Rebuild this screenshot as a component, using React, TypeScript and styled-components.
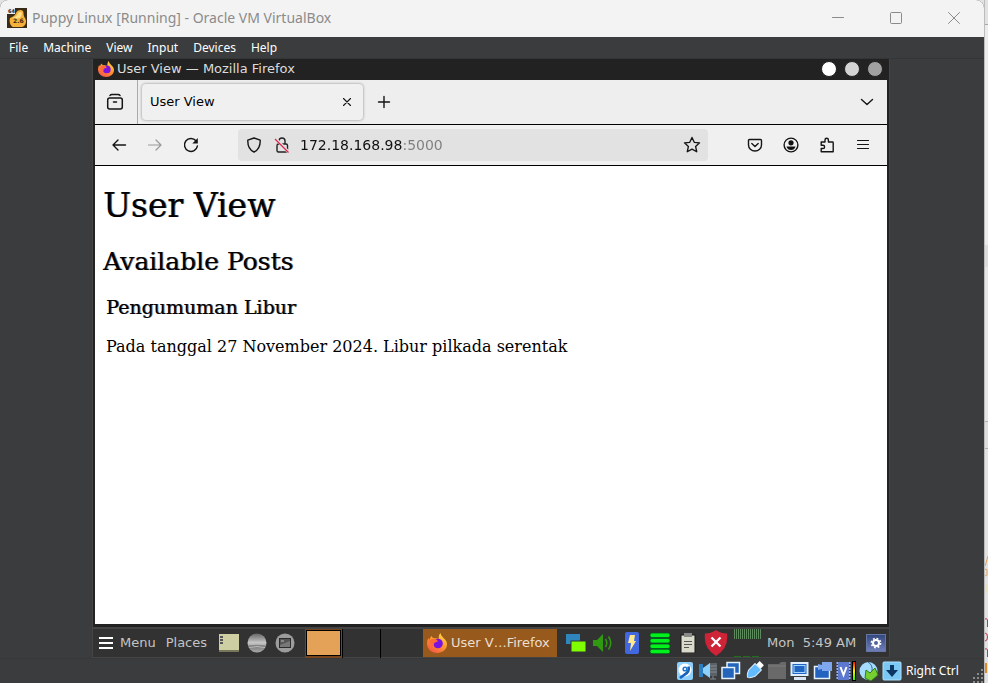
import React from "react";
import styled, { createGlobalStyle, css } from "styled-components";

const Global = createGlobalStyle`
  * { box-sizing: border-box; }
  html, body, #root { height: 100%; }
  body { margin: 0; background: #e4e4e4; overflow: hidden; }
  button, input { font: inherit; color: inherit; }
  svg { display: block; flex: none; }
`;

const sans = '"DejaVu Sans", sans-serif';
const ui = '"Noto Sans", "Open Sans", sans-serif';

const Desktop = styled.div`
  display: grid;
  grid-template-columns: 1fr 4px;
  height: 100%;
  background: #e4e4e4;
`;

const Behind = styled.aside`
  display: flex;
  flex-direction: column;
  justify-content: flex-end;
  min-height: 0;
  padding-bottom: 4px;
  overflow: hidden;
  border-left: 1px solid #bcbcbc;
  background: linear-gradient(#e2e2e2 0 24px, #a8a8a8 24px 25px, #ececec 25px 245px, #dcdcdc 245px 267px, #e6e6e6 267px 421px, #b0b0b0 421px 422px, #dedede 422px 448px, #b0b0b0 448px 449px, #e2e2e2 449px);
`;

const Window = styled.section`
  display: flex;
  flex-direction: column;
  min-width: 0;
  background: #3b3c3d;
  border-radius: 8px 8px 0 0;
  overflow: hidden;
`;

const TitleBar = styled.header`
  display: flex;
  align-items: center;
  height: 37px;
  padding: 0 12px 1px 7px;
  gap: 5px;
  background: #f3f3f3;
`;

const WindowTitle = styled.h1`
  flex: 1;
  margin: 0;
  font: 400 14px/20px ${ui};
  color: #8b8b8b;
  white-space: nowrap;
`;

const IconButton = styled.button<{ $w: number; $h?: number }>`
  display: flex;
  flex: none;
  align-items: center;
  justify-content: center;
  width: ${(p) => p.$w}px;
  height: ${(p) => p.$h ?? 28}px;
  padding: 0;
  border: 0;
  background: none;
`;

const MenuBar = styled.nav`
  display: flex;
  align-items: center;
  height: 21px;
  padding: 0 9px;
  gap: 15px;
  color: #fff;
`;

const MenuItem = styled.button`
  padding: 0;
  border: 0;
  background: none;
  font: 12px/20px ${ui};
`;

const Stage = styled.main`
  display: flex;
  flex: 1;
  min-height: 0;
  padding: 0 94px 0 92px;
  border-top: 1px solid #343536;
  border-bottom: 1px solid #373839;
`;

const Guest = styled.div`
  display: flex;
  flex: 1;
  flex-direction: column;
  min-width: 0;
  border: solid #454545;
  border-width: 0 1px 1px;
  background: #222;
  font-family: ${sans};
`;

const Browser = styled.article`
  display: flex;
  flex: 1;
  flex-direction: column;
  padding: 0 2px 3px;
  border-bottom: 2px solid #444;
  background: #222;
`;

const GuestTitle = styled.header`
  display: flex;
  align-items: center;
  height: 21px;
  padding: 0 4px 2px 3px;
  gap: 3px;
  color: #dcdcdc;
  font: 13px/18px ${sans};
`;

const Grow = styled.span`
  flex: 1;
`;

const Dots = styled.div`
  display: flex;
  gap: 7px;
`;

const Dot = styled.button<{ $color: string }>`
  width: 16px;
  height: 16px;
  padding: 0;
  border: 1px solid #222;
  border-radius: 50%;
  background: ${(p) => p.$color};
`;

const Tabs = styled.div`
  display: flex;
  align-items: center;
  height: 45px;
  border-bottom: 1px solid #000;
  background: #eee;
`;

const TabOverview = styled.div`
  display: flex;
  align-items: center;
  align-self: stretch;
  padding: 0 8px 0 5px;
  border-right: 1px solid #aaa;
`;

const Tab = styled.div`
  display: flex;
  align-items: center;
  width: 221px;
  height: 36px;
  margin: 0 6px 0 4px;
  padding: 0 2px 0 8px;
  border-radius: 4px;
  background: #f0f0f0;
  box-shadow: 0 0 3px #888;
  font: 13px/20px ${sans};
`;

const Toolbar = styled.div`
  display: flex;
  align-items: center;
  height: 41px;
  padding: 0 6px;
  border-bottom: 1px solid #000;
  background: #f0f0f0;
`;

const ToolGroup = styled.div<{ $gap: number }>`
  display: flex;
  align-items: center;
  gap: ${(p) => p.$gap}px;
`;

const AddressBar = styled.label`
  display: flex;
  flex: 1;
  align-items: center;
  height: 32px;
  margin: 0 29px;
  padding: 0 2px;
  border-radius: 4px;
  background: #e2e2e2;
  font-size: 14px;
  line-height: 20px;
`;

const AddressInput = styled.input`
  flex: 1;
  min-width: 0;
  margin-left: 4px;
  padding: 0;
  border: 0;
  outline: 0;
  background: linear-gradient(90deg, #111 103px, #7d7d7d 103px);
  background-clip: text;
  -webkit-background-clip: text;
  -webkit-text-fill-color: transparent;
`;

const Page = styled.div`
  flex: 1;
  padding: 19px 8px;
  background: #fff;
  color: #000;
  font-family: "DejaVu Serif", serif;
`;

const heading = css`
  margin: 0;
  font-weight: 400;
  text-shadow: 1px 0 0 rgba(0, 0, 0, 0.6);
`;

const H1 = styled.h1`
  ${heading}
  font-size: 33px;
  line-height: 42px;
`;
const H2 = styled.h2`
  ${heading}
  margin-top: 19px;
  font-size: 25px;
  line-height: 32px;
`;
const Post = styled.section`
  padding: 0 3px;
`;
const H3 = styled.h3`
  ${heading}
  margin-top: 17px;
  font-size: 19px;
  line-height: 24px;
`;
const Body = styled.p`
  margin: 18px 0 0;
  font-size: 16px;
  line-height: 20px;
`;

const Taskbar = styled.footer`
  display: flex;
  align-items: center;
  height: 28px;
  padding: 0 3px 0 6px;
  background: #323232;
  color: #c4c4c4;
  font: 13px/20px ${sans};
`;

const TaskButton = styled.button`
  display: flex;
  align-items: center;
  gap: 7px;
  padding: 0;
  border: 0;
  background: none;
  white-space: nowrap;
`;

const Launchers = styled.div`
  display: flex;
  align-items: center;
  gap: 8px;
  margin: 0 10px 0 12px;
`;

const Workspaces = styled.div`
  display: grid;
  grid-template-columns: 38px 38px 42px;
  height: 28px;
`;

const Workspace = styled.button<{ $active?: boolean }>`
  padding: 1px 1px 2px;
  border: 0;
  border-right: 1px solid #000;
  background: ${(p) => (p.$active ? "#77451d" : "none")};
  &:last-child { border-right: 0; }
  &::before {
    content: "";
    display: ${(p) => (p.$active ? "block" : "none")};
    height: 24px;
    border: 1px solid #000;
    background: #e3a258;
  }
`;

const ActiveTask = styled.button`
  display: flex;
  flex: none;
  align-items: center;
  width: 134px;
  height: 28px;
  padding: 0 4px;
  gap: 4px;
  border: 0;
  background: #98591c;
  color: #eadfd2;
  white-space: nowrap;
`;

const Tray = styled.div`
  display: flex;
  flex: 1;
  align-items: center;
  gap: 6px;
  margin-left: 9px;
`;

const Clock = styled.time`
  margin-right: auto;
  white-space: pre;
`;

const StatusBar = styled.footer`
  display: flex;
  align-items: center;
  justify-content: flex-end;
  height: 24px;
  gap: 3px;
  color: #fff;
  font: 12px/20px ${ui};
`;

const HostKey = styled.span`
  width: 61px;
  margin-left: 1px;
  white-space: nowrap;
`;

const Corner = styled.span`
  align-self: flex-end;
`;

const Stroke = ({ w = 16, d, color = "#151515", sw = 1.4 }: { w?: number; d: string; color?: string; sw?: number }) => (
  <svg width={w} height={w} viewBox="0 0 16 16" fill="none" stroke={color} strokeWidth={sw} strokeLinecap="round" strokeLinejoin="round" aria-hidden>
    <path d={d} />
  </svg>
);

const Firefox = ({ size }: { size: number }) => (
  <svg width={size} height={size} viewBox="0 0 20 20" aria-hidden>
    <defs>
      <linearGradient id={"fx" + size} x1="0.85" y1="0" x2="0.2" y2="1">
        <stop offset="0" stopColor="#ffe34a" />
        <stop offset="0.45" stopColor="#ff9a2e" />
        <stop offset="1" stopColor="#f5524c" />
      </linearGradient>
    </defs>
    <path fill={"url(#fx" + size + ")"} d="M13.5 0c.3 2.200 1.500 3.300 3 5 2.300 1.900 3.500 4 3.500 6.300C20 16.200 15.700 20 10.200 20 4.700 20 0 16.100 0 10.700 0 8.200.8 6.200 1.500 5c.2.8.4 1.200 1 1.700C2.800 5.300 3.400 4 4.700 3c.3 1.200 1 2 2.500 2.200 2-.1 3.500.2 4.500.8C11.500 3.600 12 1.500 13.500 0z" />
    <circle cx="11" cy="10.500" r="4.800" fill="#7a12e0" />
    <path fill="#ff6a3a" d="M2 8c2-2 4.500-2.400 7.500-1.600L11 8.200 8.200 9.500C7 10 6.500 11 7 12.500L4 14z" />
  </svg>
);

const PuppyLogo = () => (
  <svg width="20" height="20" viewBox="0 0 20 20" aria-hidden>
    <rect width="20" height="20" fill="#3a2b18" />
    <path fill="#f5b13a" d="M3 10c2-1 5-2 6-5s5-4 7-2c1 2 0 4 2 7s1 8-3 9H6c-3-1-4-6-3-9z" />
    <path fill="#ffe08a" d="M5 10c3-1 5-2 6-5 2-2 4-1 4 1l-2 4-6 1z" />
    <rect x="0" y="0" width="8" height="6" fill="#eee" />
    <text x="1" y="5" fontSize="5" fontWeight="700" fontFamily="DejaVu Sans" fill="#222">64</text>
    <text x="6" y="15" fontSize="6" fontWeight="700" fontFamily="DejaVu Sans" fill="#3b250c">2.6</text>
  </svg>
);

const Menu = ["File", "Machine", "View", "Input", "Devices", "Help"];

export default function App() {
  return (
    <>
      <Global />
      <Desktop>
        <Window>
          <TitleBar>
            <PuppyLogo />
            <WindowTitle>Puppy Linux [Running] - Oracle VM VirtualBox</WindowTitle>
            <ToolGroup $gap={22}>
              <IconButton $w={36} aria-label="Minimize"><Stroke d="M2.500 7.500h11" color="#8b8b8b" sw={1} /></IconButton>
              <IconButton $w={36} aria-label="Maximize"><svg width="16" height="16" fill="none" stroke="#8b8b8b"><rect x="2.500" y="2.500" width="11" height="11" rx="1" /></svg></IconButton>
              <IconButton $w={36} aria-label="Close"><Stroke d="M2.500 2.500l11 11m0-11l-11 11" color="#8b8b8b" sw={1} /></IconButton>
            </ToolGroup>
          </TitleBar>
          <MenuBar>{Menu.map((m) => <MenuItem key={m}>{m}</MenuItem>)}</MenuBar>
          <Stage>
            <Guest>
              <Browser>
                <GuestTitle>
                  <Firefox size={16} />
                  <span>User View — Mozilla Firefox</span>
                  <Grow />
                  <Dots>
                    <Dot $color="#fff" aria-label="Minimize" />
                    <Dot $color="#d3d3d3" aria-label="Maximize" />
                    <Dot $color="#a0a0a0" aria-label="Close" />
                  </Dots>
                </GuestTitle>
                <Tabs>
                  <TabOverview>
                    <IconButton $w={29} aria-label="Firefox View">
                      <svg width="18" height="18" viewBox="0 0 18 18" fill="none" stroke="#151515" strokeWidth="1.500" strokeLinecap="round"><path d="M4 2.500Q4.500 1.500 6 1.500h6Q13.500 1.500 14 2.500" /><rect x="1.700" y="5" width="14.600" height="11" rx="2" /><path d="M7.500 9h3" /></svg>
                    </IconButton>
                  </TabOverview>
                  <Tab>
                    <span>User View</span>
                    <Grow />
                    <IconButton $w={28} aria-label="Close tab"><Stroke d="M4.500 4.500l7 7m0-7l-7 7" sw={1.1} /></IconButton>
                  </Tab>
                  <IconButton $w={30} aria-label="New tab"><Stroke d="M8 2.500v11M2.500 8h11" /></IconButton>
                  <Grow />
                  <IconButton $w={40} aria-label="List all tabs"><Stroke d="M2.500 5.500l5.500 5 5.500-5" /></IconButton>
                </Tabs>
                <Toolbar>
                  <ToolGroup $gap={0}>
                    <IconButton $w={36} aria-label="Back"><Stroke d="M14.500 8H2m5-5L2 8l5 5" /></IconButton>
                    <IconButton $w={36} aria-label="Forward"><Stroke d="M1.500 8H14M9 3l5 5-5 5" color="#999" sw={1.2} /></IconButton>
                    <IconButton $w={36} aria-label="Reload">
                      <svg width="16" height="16" viewBox="0 0 16 16" fill="none" stroke="#151515" strokeWidth="1.500"><path d="M13 3.800A6.500 6.500 0 1 0 14.400 9" strokeLinecap="round" /><path d="M14.800 1v5.500H9.300z" fill="#151515" stroke="none" /></svg>
                    </IconButton>
                  </ToolGroup>
                  <AddressBar>
                    <IconButton $w={28} as="span"><Stroke d="M8 1L14.200 3.200C14.400 9 12.500 13 8 15 3.500 13 1.600 9 1.800 3.200z" /></IconButton>
                    <IconButton $w={28} as="span">
                      <svg width="16" height="16" viewBox="0 0 16 16" fill="none" stroke="#222" strokeWidth="1.400"><path d="M5 7V4a3 3 0 0 1 6 0v3" /><rect x="3" y="7" width="10.500" height="8" rx="1.500" /><path d="M1.500 1.500l13 13.500" stroke="#e2e2e2" strokeWidth="3" /><path d="M1 2l13.500 13.500" stroke="#e0244c" strokeWidth="1.300" /></svg>
                    </IconButton>
                    <AddressInput aria-label="Address" defaultValue="172.18.168.98:5000" />
                    <IconButton $w={28} aria-label="Bookmark"><Stroke w={18} d="M8 1.300l2 4.300 4.700.5-3.500 3.200 1 4.700L8 11.700 3.800 14l1-4.700L1.300 6.100 6 5.600z" sw={1.2} /></IconButton>
                  </AddressBar>
                  <ToolGroup $gap={0}>
                    <IconButton $w={36} aria-label="Pocket"><Stroke d="M2.500 2.500h11q1 0 1 1V8a6.500 6 0 0 1-13 0V3.500q0-1 1-1zM4.800 6.500L8 9.500l3.200-3" /></IconButton>
                    <IconButton $w={36} aria-label="Account">
                      <svg width="16" height="16" viewBox="0 0 16 16"><circle cx="8" cy="8" r="6.900" fill="none" stroke="#111" strokeWidth="1.400" /><circle cx="8" cy="5.800" r="2.600" fill="#111" /><path d="M3.500 9.500h9Q11.500 13 8 13T3.500 9.500z" fill="#111" /></svg>
                    </IconButton>
                    <IconButton $w={36} aria-label="Extensions"><Stroke d="M2.200 5H6V3a1.700 1.700 0 0 1 3.400 0v2h4.100q.7 0 .7.700v9H2.200V11.500H4a1.600 1.600 0 0 0 0-3.200H2.200z" /></IconButton>
                    <IconButton $w={36} aria-label="Application menu"><Stroke d="M2.500 3.500h11M2.500 7.500h11M2.500 11.500h11" sw={1.2} /></IconButton>
                  </ToolGroup>
                </Toolbar>
                <Page>
                  <H1>User View</H1>
                  <H2>Available Posts</H2>
                  <Post>
                    <H3>Pengumuman Libur</H3>
                    <Body>Pada tanggal 27 November 2024. Libur pilkada serentak</Body>
                  </Post>
                </Page>
              </Browser>
              <Taskbar>
                <ToolGroup $gap={10}>
                  <TaskButton>
                    <svg width="14" height="12" fill="#fff"><path d="M0 0h14v2H0zM0 5h14v2H0zM0 10h14v2H0z" /></svg>
                    Menu
                  </TaskButton>
                  <TaskButton>Places</TaskButton>
                </ToolGroup>
                <Launchers>
                  <svg width="20" height="18"><rect width="20" height="16" fill="#cfcfa4" /><rect y="16" width="20" height="2" fill="#77775c" /><path d="M1 2h3v2H1zM1 5h3v2H1zM1 8h3v2H1z" fill="#555" /></svg>
                  <svg width="20" height="20"><defs><linearGradient id="ball" x2="0" y2="1"><stop stopColor="#666" /><stop offset=".35" stopColor="#aaa" /><stop offset=".5" stopColor="#ccc" /><stop offset=".65" stopColor="#777" /><stop offset="1" stopColor="#aaa" /></linearGradient></defs><circle cx="10" cy="10" r="9.500" fill="url(#ball)" /><path d="M1 12q9-2 18 0M2 14.500q8-2 16 0" stroke="#bbb" fill="none" /></svg>
                  <svg width="20" height="20"><circle cx="10" cy="10" r="9.500" fill="#9c9c9c" /><rect x="4.500" y="5.500" width="11" height="9" fill="#555" stroke="#2c2c2c" /><path d="M6 8h3" stroke="#bbb" /><path d="M5 12l10-4v6H5z" fill="#777" /></svg>
                </Launchers>
                <Workspaces>
                  <Workspace $active aria-label="Workspace 1" />
                  <Workspace aria-label="Workspace 2" />
                  <Workspace aria-label="Workspace 3" />
                </Workspaces>
                <ActiveTask><Firefox size={20} />User V…Firefox</ActiveTask>
                <Tray>
                  <svg width="20" height="20"><rect y="1" width="14" height="10" fill="#2f86bf" /><rect x="5" y="8" width="15" height="11" fill="#80ff00" stroke="#323232" /></svg>
                  <svg width="22" height="20" fill="none" stroke="#2f9a10" strokeWidth="1.500"><path d="M1 7h4l6-6v18l-6-6H1z" fill="#2f9a10" stroke="none" /><path d="M13.500 6q2.500 4 0 8M16.500 3.500q4.500 6.500 0 13" /></svg>
                  <svg width="22" height="22" viewBox="-4 0 22 22"><rect x="1" width="14" height="22" rx="2" fill="#4268e0" /><path d="M6 3h5l-1 6h2l-6 10 1-8H4z" fill="#ffe98c" /></svg>
                  <svg width="24" height="22" fill="#00f21a" stroke="#052" strokeWidth=".8"><rect x="2" y="1" width="20" height="4.500" rx="2" /><rect x="2" y="6.500" width="20" height="4.500" rx="2" /><rect x="2" y="12" width="20" height="4.500" rx="2" /><rect x="2" y="17.200" width="20" height="4.500" rx="2" /></svg>
                  <svg width="20" height="20" viewBox="-2 0 20 20"><rect x="1" y="2" width="14" height="18" fill="#dadacb" stroke="#171717" /><rect x="4" width="8" height="4" fill="#888" /><path d="M4 8.500h8M4 11.500h8M4 14.500h5" stroke="#555" /></svg>
                  <svg width="24" height="26"><path d="M12 0q5 3.500 11 3.500Q25 18 12 26-1 18 1 3.500 7 3.500 12 0z" fill="#cf2438" /><path d="M7.500 7.500l9 9m0-9l-9 9" stroke="#fff" strokeWidth="2.300" /></svg>
                  <svg width="27" height="28"><path d="M0 5h27" stroke="#5c8a5c" strokeWidth="10" strokeDasharray="1 1" /><path d="M0 27.500h27" stroke="#1d6e1d" strokeDasharray="7 2" /></svg>
                  <Clock>Mon  5:49 AM</Clock>
                  <svg width="20" height="18"><defs><linearGradient id="gear" x2="0" y2="1"><stop stopColor="#32467c" /><stop offset="1" stopColor="#7180bb" /></linearGradient></defs><rect x=".5" y=".5" width="19" height="17" fill="url(#gear)" stroke="#6476a5" /><circle cx="10" cy="9" r="3" fill="none" stroke="#fff" strokeWidth="2" /><circle cx="10" cy="9" r="4.600" fill="none" stroke="#fff" strokeWidth="1.600" strokeDasharray="1.800 1.800" /></svg>
                </Tray>
              </Taskbar>
            </Guest>
          </Stage>
          <StatusBar>
            <svg width="20" height="20"><rect x="2" y="1" width="16" height="18" rx="2" fill="#8fd0ff" /><circle cx="10" cy="9" r="6.500" fill="#fff" /><path d="M13.500 5.500Q15 11 9 14l-4 3" fill="none" stroke="#1762b8" strokeWidth="2.600" /><circle cx="10" cy="8" r="2.600" fill="#1f78c8" /><circle cx="10" cy="8" r="1.100" fill="#fff" /></svg>
            <svg width="20" height="20"><rect x="11" y="2" width="8" height="13" fill="#5b6267" /><path d="M11 5h8M11 8h8M11 11h8M15 15v3M12 18h6" stroke="#818a90" /><path d="M1 3h4v13H1z" fill="#2d7fc4" /><path d="M5 7l7-5v15l-7-5z" fill="#8bd2ff" /></svg>
            <svg width="20" height="20" fill="#2464bb" stroke="#e4f1ff" strokeWidth="1.500"><rect x="6" y="1.500" width="12.500" height="11" /><rect x="1" y="6.500" width="12.500" height="11" /></svg>
            <svg width="20" height="20"><g transform="rotate(45 10 10)"><rect x="7" y="-1" width="6" height="5" fill="#fff" /><path d="M5.500 4h9v9q-2 5-4.500 6-2.500-1-4.500-6z" fill="#62baff" stroke="#d6efff" /></g></svg>
            <svg width="20" height="20"><path d="M1 3h11l2-2h5v17H1z" fill="#69696a" /><path d="M1 5h18" stroke="#7c7c7d" /></svg>
            <svg width="20" height="20"><rect x="1.500" y="2" width="16" height="12" fill="#1e66c2" stroke="#e0eefc" strokeWidth="2" /><rect x="4" y="4.500" width="11" height="7" fill="none" stroke="#a8d3ff" /><path d="M4 17.500h12" stroke="#d8e6f4" strokeWidth="3" /></svg>
            <svg width="20" height="20"><path d="M1.500 5.500h15v12h-15z" fill="#2263bf" stroke="#e4f1ff" strokeWidth="1.500" /><path d="M5 3l4 1V1h10v9H9V8L5 9z" fill="#7fa7f0" /></svg>
            <svg width="20" height="20"><path d="M2 1v18M13 1v18" stroke="#9ab2f4" strokeWidth="3" strokeDasharray="2 1" /><rect x="2" y="1" width="11" height="18" fill="#5d78cf" /><path d="M4.500 6l3 8 3-8" fill="none" stroke="#fff" strokeWidth="2" /><defs><linearGradient id="load" x2="0" y2="1"><stop stopColor="red" /><stop offset=".5" stopColor="#fe0" /><stop offset="1" stopColor="#1f0" /></linearGradient></defs><rect x="16.500" y=".5" width="3" height="19" fill="url(#load)" stroke="#000" /></svg>
            <svg width="20" height="20"><circle cx="9.500" cy="10" r="9" fill="#a6dcff" /><path d="M9 1q5 3 4 9" fill="none" stroke="#356b91" /><path d="M7 9l4 3 5-5 3 7-7 6-6-3z" fill="#75cf30" stroke="#317b18" /></svg>
            <svg width="20" height="20"><rect x="1" y="1" width="18" height="18" rx="1" fill="#7bc8f5" stroke="#aae1ff" /><path d="M8 4h4v5h4l-6 7-6-7h4z" fill="#0b3563" /></svg>
            <HostKey>Right Ctrl</HostKey>
            <Corner><svg width="14" height="14" fill="#8b8b8b"><path d="M11 0h2v2h-2zM11 4h2v2h-2zM7 4h2v2H7zM11 8h2v2h-2zM7 8h2v2H7zM3 8h2v2H3zM11 12h2v2h-2zM7 12h2v2H7zM3 12h2v2H3z" /></svg></Corner>
          </StatusBar>
        </Window>
        <Behind aria-hidden>
          <svg width="3" height="124" fill="none" strokeWidth="1">
            <path d="M3 1L1 8L0 11M0 14q3 0 2 3q1 4-2 4" stroke="#dda35c" />
            <path d="M1 30v8" stroke="#e5e0a0" />
            <path d="M0 64q2-1 2.500 1v7M0 78q2.500 0 2.500 4T0 86M0 94q2-1 2.500 1v7" stroke="#c8304c" />
            <path d="M1 108v10" stroke="#e08a2c" strokeWidth="2" />
          </svg>
        </Behind>
      </Desktop>
    </>
  );
}
